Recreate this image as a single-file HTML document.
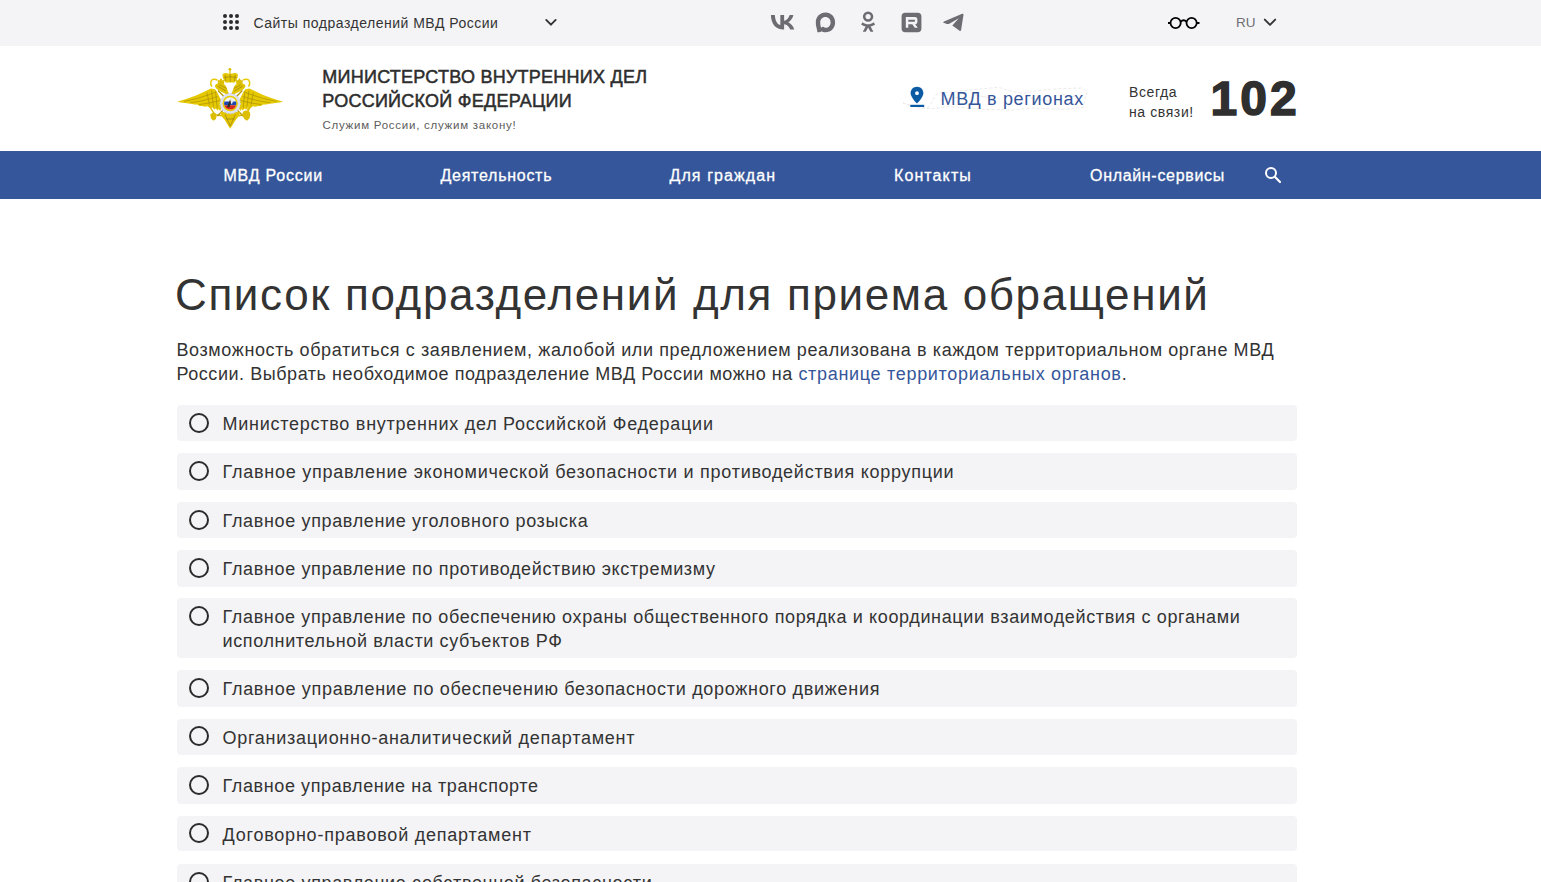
<!DOCTYPE html>
<html lang="ru">
<head>
<meta charset="utf-8">
<title>Список подразделений для приема обращений</title>
<style>
html,body{margin:0;padding:0;background:#fff;}
body{width:1541px;height:882px;overflow:hidden;position:relative;font-family:"Liberation Sans",sans-serif;color:#333;}
.a{position:absolute;white-space:nowrap;}
#topbar{position:absolute;left:0;top:0;width:1541px;height:46px;background:#f4f4f6;}
#nav{position:absolute;left:0;top:151px;width:1541px;height:48px;background:#35569a;}
.nav{position:absolute;top:164.2px;line-height:24px;font-size:16px;font-weight:400;letter-spacing:0.3px;-webkit-text-stroke:0.3px #fff;color:#fff;white-space:nowrap;}
.box{position:absolute;left:177px;width:1120px;background:#f4f4f6;border-radius:4px;}
.box .r{position:absolute;left:12px;top:7.5px;width:16px;height:16px;border:2px solid #2b2b2b;border-radius:50%;}
.box .t{position:absolute;left:45.5px;top:6.8px;font-size:18px;line-height:24px;letter-spacing:0.68px;color:#333;white-space:nowrap;}
</style>
</head>
<body>
<div id="topbar"></div>
<!-- grid dots -->
<svg class="a" style="left:221px;top:12px" width="20" height="20" viewBox="0 0 20 20">
<g fill="#2b2b2b"><circle cx="4" cy="4" r="2"/><circle cx="10" cy="4" r="2"/><circle cx="16" cy="4" r="2"/><circle cx="4" cy="10" r="2"/><circle cx="10" cy="10" r="2"/><circle cx="16" cy="10" r="2"/><circle cx="4" cy="16" r="2"/><circle cx="10" cy="16" r="2"/><circle cx="16" cy="16" r="2"/></g>
</svg>
<div class="a" style="left:253.5px;top:11px;font-size:14px;line-height:24px;letter-spacing:0.5px;color:#333">Сайты подразделений МВД России</div>
<svg class="a" style="left:543px;top:16px" width="16" height="12" viewBox="0 0 16 12"><path d="M3.2 3.9 L7.9 8.7 L12.7 3.9" fill="none" stroke="#333" stroke-width="1.9" stroke-linecap="round" stroke-linejoin="round"/></svg>

<!-- socials placeholder -->
<svg class="a" style="left:760px;top:5px" width="220" height="35" viewBox="760 5 220 35">
<g fill="#6d6c72">
<path transform="translate(765 4.2) scale(0.35)" d="M53.2 72.1C30.4 72.1 17.4 56.5 16.9 30.5H28.3C28.7 49.6 37.1 57.7 43.8 59.4V30.5H54.6V47C61.2 46.3 68.1 38.8 70.5 30.5H81.2C79.4 40.7 71.9 48.2 66.6 51.3C71.9 53.8 80.4 60.3 83.6 72.1H71.8C69.3 64.2 63 58.1 54.6 57.3V72.1H53.2Z"/>
<path fill-rule="evenodd" d="M825.6 12.6C831 12.6 835.1 16.9 835.1 22.4C835.1 27.9 831 32.2 825.6 32.2C823.9 32.2 822.6 31.8 821.6 31.2C820.6 32 819 32.5 817.4 32.3C817.2 30.5 816.8 28.6 816.3 26.8C816 25.6 815.8 24 815.8 22.4C815.8 16.9 820 12.6 825.6 12.6ZM825.4 17.1C822.2 17.1 820.2 19.6 820.2 22.5C820.2 24.3 820.5 26.2 821.1 27.8C821.9 27 822.8 26.6 823.6 26.9C824.2 27.3 824.8 27.7 825.6 27.7C828.6 27.7 830.6 25.3 830.6 22.4C830.6 19.5 828.5 17.1 825.4 17.1Z"/>
<path fill-rule="evenodd" d="M868.1 11.4A5.2 5.2 0 1 1 868.1 21.8A5.2 5.2 0 1 1 868.1 11.4ZM868.1 14A2.6 2.6 0 1 0 868.1 19.2A2.6 2.6 0 1 0 868.1 14Z"/>
<path d="M862.6 22.2C864.5 23.6 866.2 24.2 868.1 24.2C870 24.2 871.7 23.6 873.6 22.2L875.1 24.4C873.8 25.5 872.3 26.2 870.6 26.6L873.4 31.7H870.4L868.1 27.6L865.8 31.7H862.8L865.6 26.6C863.9 26.2 862.4 25.5 861.1 24.4Z"/>
<path fill-rule="evenodd" d="M905.1 12.7H917.9C920 12.7 921.4 14.1 921.4 16.2V28.7C921.4 30.8 920 32.2 917.9 32.2H905.1C903 32.2 901.6 30.8 901.6 28.7V16.2C901.6 14.1 903 12.7 905.1 12.7ZM905.8 17.1V27.7H908.3V24.3H912.3L914.8 27.7H917.8L915.2 24.2C916.6 24 917.4 23.2 917.4 21.8V19.5C917.4 18 916.5 17.1 915 17.1ZM908.3 19.7H914.9V21.7H908.3Z"/>
<path d="M943.1 22.4C943.1 21.9 943.5 21.6 944 21.4L962.2 13.8C962.9 13.5 963.6 14 963.5 14.8L961.1 30C961 30.8 960.2 31.1 959.6 30.7L952.3 25.6L958.8 18.2L949.3 23.8C948.5 24.2 947.6 24.2 946.8 23.9Z"/>
</g></svg>

<!-- glasses -->
<svg class="a" style="left:1166px;top:14px" width="36" height="18" viewBox="0 0 36 18">
<g fill="none" stroke="#000" stroke-width="1.8"><circle cx="9.6" cy="9" r="5.1"/><circle cx="25.6" cy="9" r="5.1"/><path d="M14.5 8 Q17.6 4.5 20.7 8"/><path d="M2 9 H4.5 M31 9 H33.5"/></g>
</svg>
<div class="a" style="left:1236px;top:11px;font-size:13.5px;line-height:24px;color:#6e6e73">RU</div>
<svg class="a" style="left:1261px;top:14px" width="18" height="14" viewBox="0 0 18 14"><path d="M3.8 5.6 L9 10.8 L14.2 5.6" fill="none" stroke="#333" stroke-width="1.9" stroke-linecap="round" stroke-linejoin="round"/></svg>

<!-- header -->
<svg class="a" style="left:175px;top:65px" width="112" height="67" viewBox="175 65 112 67">
<g>
<path d="M177.2 101.7 L187 98.7 L197.2 94.9 L205.7 91 L210.8 88.5 L215 89.3 L217.2 92.3 L219.3 96.6 L221.5 100.8 L221.5 108 L220.2 111 L218.8 109 L217.6 110.6 L215.9 108.6 L214.3 109.6 L212.5 107.6 L210.2 108.2 L207.4 106.3 L204.8 106.8 L202.3 105.9 L199.6 105.9 L197.2 104.6 L194.2 104.6 L191.3 103.8 L188.2 103.6 L185.3 102.9 L181 102.6 Z" fill="#e6c900"/>
<path d="M184 101.4 L197 98.5 L208 95 L215 92.5 M190 102.8 L201 101 L211 98.5 L217.5 96.5 M199 104.6 L208 103.2 L216 101.5 L220 100.5 M207 92.5 L209.5 105.5 M211.5 90.5 L213.5 106.8 M215.5 91 L217.2 108" fill="none" stroke="#968010" stroke-width="0.75" opacity="0.7"/>
<path d="M215 85.5 C216 83.5 219 83 222 83.5 C224.5 84 226 85.5 226.8 88 C227.6 90.5 228.3 92.5 229.6 94.8 L226 94.2 C223.5 92.8 220 91.2 217.5 89.6 C216 88.6 215 87 215 85.5 Z" fill="#e2c502"/>
<path d="M217.5 86 L226 91 M219.5 84.8 L226.5 88.5" stroke="#968010" stroke-width="0.7"/>
<path d="M218 84.2 L217.6 79.6 L219.4 80.6 L221 78 L222.6 80.6 L224.4 79.6 L224 84.2 Z" fill="#dcbf04"/>
<path d="M217.2 80.2 C215 78.6 211.6 79 210.9 81.6 C210.4 83.6 211 85.5 212 86.5" fill="none" stroke="#e6c900" stroke-width="1.5"/>
<path d="M208.3 104.2 L214.1 113.6" stroke="#dcbf04" stroke-width="1.3"/>
<path d="M210.2 114.5 L213.5 112 L216.9 114.2 L216 119 L213.5 120.8 L211 118.5 Z" fill="#dabd04"/>
<path d="M216.5 115 L222 115.8" stroke="#dabd04" stroke-width="1.4"/>
</g>
<g transform="translate(460.4 0) scale(-1 1)">
<path d="M177.2 101.7 L187 98.7 L197.2 94.9 L205.7 91 L210.8 88.5 L215 89.3 L217.2 92.3 L219.3 96.6 L221.5 100.8 L221.5 108 L220.2 111 L218.8 109 L217.6 110.6 L215.9 108.6 L214.3 109.6 L212.5 107.6 L210.2 108.2 L207.4 106.3 L204.8 106.8 L202.3 105.9 L199.6 105.9 L197.2 104.6 L194.2 104.6 L191.3 103.8 L188.2 103.6 L185.3 102.9 L181 102.6 Z" fill="#e6c900"/>
<path d="M184 101.4 L197 98.5 L208 95 L215 92.5 M190 102.8 L201 101 L211 98.5 L217.5 96.5 M199 104.6 L208 103.2 L216 101.5 L220 100.5 M207 92.5 L209.5 105.5 M211.5 90.5 L213.5 106.8 M215.5 91 L217.2 108" fill="none" stroke="#968010" stroke-width="0.75" opacity="0.7"/>
<path d="M215 85.5 C216 83.5 219 83 222 83.5 C224.5 84 226 85.5 226.8 88 C227.6 90.5 228.3 92.5 229.6 94.8 L226 94.2 C223.5 92.8 220 91.2 217.5 89.6 C216 88.6 215 87 215 85.5 Z" fill="#e2c502"/>
<path d="M217.5 86 L226 91 M219.5 84.8 L226.5 88.5" stroke="#968010" stroke-width="0.7"/>
<path d="M218 84.2 L217.6 79.6 L219.4 80.6 L221 78 L222.6 80.6 L224.4 79.6 L224 84.2 Z" fill="#dcbf04"/>
<path d="M217.2 80.2 C215 78.6 211.6 79 210.9 81.6 C210.4 83.6 211 85.5 212 86.5" fill="none" stroke="#e6c900" stroke-width="1.5"/>
<path d="M208.3 104.2 L214.1 113.6" stroke="#dcbf04" stroke-width="1.3"/>
<path d="M210.2 114.5 L213.5 112 L216.9 114.2 L216 119 L213.5 120.8 L211 118.5 Z" fill="#dabd04"/>
<path d="M216.5 115 L222 115.8" stroke="#dabd04" stroke-width="1.4"/>
</g>
<path d="M223.6 80.5 Q230.2 79 236.8 80.5" fill="none" stroke="#e2c502" stroke-width="1"/>
<path d="M225.6 82.5 C224 80 222.5 78 222.5 75.5 C222.5 73.5 224.5 72.8 226.5 73.2 C228 73.5 229 73.8 230.2 73.5 C231.4 73.8 232.4 73.5 233.9 73.2 C235.9 72.8 237.9 73.5 237.9 75.5 C237.9 78 236.4 80 234.8 82.5 Z" fill="#e4c702"/>
<path d="M226 81 L225 75 M230.2 81.5 V74 M234.4 81 L235.4 75 M224 77.5 Q230.2 76 236.4 77.5" fill="none" stroke="#968010" stroke-width="0.65"/>
<circle cx="229.9" cy="69.3" r="1.4" fill="#dcbf04"/>
<path d="M229.9 70 V73.5" stroke="#dcbf04" stroke-width="1.3"/>
<path d="M218 90.5 L243 116 M242.4 90.5 L217.4 116" stroke="#b89c0a" stroke-width="1.4"/>
<path d="M220 112 L240.4 112 L239 116 L235.6 120 L232 126 L230.2 128.8 L228.4 126 L224.8 120 L221.4 116 Z" fill="#e4c702"/>
<path d="M225 114.5 L230.2 126 L235.4 114.5 M226 119 H234.4" fill="none" stroke="#968010" stroke-width="0.7"/>
<circle cx="230.2" cy="103.6" r="10.2" fill="#dde1f2"/>
<circle cx="230.2" cy="103.6" r="10.2" fill="none" stroke="#c4cbe6" stroke-width="1" stroke-dasharray="1.5 1.5"/>
<circle cx="230.2" cy="103.5" r="7.7" fill="#e8cb00"/>
<circle cx="230.2" cy="103.4" r="6.1" fill="#f4f4f4"/><path d="M224.37 101.6 H236.03 A6.1 6.1 0 0 1 236.03 105.2 H224.37 A6.1 6.1 0 0 1 224.37 101.6 Z" fill="#1f48b0"/><path d="M224.37 105.2 H236.03 A6.1 6.1 0 0 1 224.37 105.2 Z" fill="#d8281e"/>
<circle cx="246.3" cy="114.4" r="3.9" fill="#dcbf04"/><path d="M248.2 107.5 V111 M246.6 109 H249.8" stroke="#dcbf04" stroke-width="1.2"/>
<path d="M227 107 L228.6 103 L230.4 99 L231.6 99.6 L230.6 104 L229.4 107.5 Z" fill="#2c2c2c"/>
<path d="M230 99 L232.5 98.5 L233 102 L231.4 104.5 Z" fill="#e6e8ee"/>
</svg>
<div class="a" style="left:322.3px;top:64.5px;font-size:18px;line-height:24px;font-weight:400;letter-spacing:0.25px;-webkit-text-stroke:0.5px #2d2d2d;color:#2d2d2d">МИНИСТЕРСТВО ВНУТРЕННИХ ДЕЛ</div>
<div class="a" style="left:322.3px;top:88.5px;font-size:18px;line-height:24px;font-weight:400;letter-spacing:0.25px;-webkit-text-stroke:0.5px #2d2d2d;color:#2d2d2d">РОССИЙСКОЙ ФЕДЕРАЦИИ</div>
<div class="a" style="left:322.5px;top:117px;font-size:11.5px;line-height:16px;letter-spacing:0.74px;color:#5c5c5c">Служим России, служим закону!</div>

<svg class="a" style="left:900px;top:84px" width="190" height="30" viewBox="900 84 190 30"><path d="M903 103 L910.6 105.5 L920 107 L927.4 108 L931 104 L934 97.7 L937.8 93.2 L950 92 L965 90.5 L985 88.5 L998.8 87.3 L1006.6 90 L1015 92 L1024.8 93.2 L1035 91 L1050.7 89.3 L1065 88.5 L1081.9 88 L1087 91.9 L1085 100 L1083.2 107.4 L1063.7 109.4 L1045 108.5 L1031.3 108.1 L1011.8 110 L985.9 109.4 L959.9 107.4 L946.9 106.8 L931.3 108.7 L918 108 Z" fill="none" stroke="#ebebeb" stroke-width="1" stroke-dasharray="3 2"/><path d="M940 100 L960 97 M975 95 L995 99 M1030 98 L1050 101 M1060 94 L1075 97" stroke="#ececec" stroke-width="1"/></svg>
<svg class="a" style="left:908px;top:86px" width="18" height="22" viewBox="0 0 18 22"><path d="M9 0.8 C5.3 0.8 2.6 3.6 2.6 7.2 C2.6 11.2 9 17.6 9 17.6 C9 17.6 15.4 11.2 15.4 7.2 C15.4 3.6 12.7 0.8 9 0.8 Z M9 5.3 A1.9 1.9 0 1 1 9 9.1 A1.9 1.9 0 1 1 9 5.3 Z" fill="#0b5aa4" fill-rule="evenodd"/><rect x="2.3" y="18.8" width="13.9" height="2.2" fill="#0b5aa4"/></svg>
<div class="a" style="left:940.5px;top:86.5px;font-size:18px;line-height:24px;letter-spacing:0.67px;color:#35569a">МВД в регионах</div>

<div class="a" style="left:1129px;top:82.3px;font-size:14px;line-height:20px;letter-spacing:0.6px;color:#333">Всегда</div>
<div class="a" style="left:1129px;top:101.7px;font-size:14px;line-height:20px;letter-spacing:0.6px;color:#333">на связи!</div>
<div class="a" style="left:1210.5px;top:74px;font-size:48px;line-height:50px;font-weight:700;letter-spacing:3px;-webkit-text-stroke:1.5px #2f2f2f;color:#2f2f2f">102</div>

<div id="nav"></div>
<div class="nav" style="left:223.5px;letter-spacing:0.77px">МВД России</div>
<div class="nav" style="left:440.5px;letter-spacing:0.73px">Деятельность</div>
<div class="nav" style="left:669.5px;letter-spacing:1.09px">Для граждан</div>
<div class="nav" style="left:894px;letter-spacing:1.1px">Контакты</div>
<div class="nav" style="left:1090px;letter-spacing:0.68px">Онлайн-сервисы</div>
<svg class="a" style="left:1262px;top:164px" width="22" height="22" viewBox="0 0 22 22"><circle cx="9" cy="9" r="5" fill="none" stroke="#fff" stroke-width="2"/><path d="M12.8 12.8 L18 18" stroke="#fff" stroke-width="2.2" stroke-linecap="round"/></svg>

<!-- content -->
<div class="a" style="left:175px;top:269.5px;font-size:44px;line-height:50px;letter-spacing:1.63px;color:#333">Список подразделений для приема обращений</div>
<div class="a" style="left:176.5px;top:337.8px;font-size:18px;line-height:24px;letter-spacing:0.6px;color:#333">Возможность обратиться с заявлением, жалобой или предложением реализована в каждом территориальном органе МВД</div>
<div class="a" style="left:176.5px;top:361.8px;font-size:18px;line-height:24px;letter-spacing:0.545px;color:#333">России. Выбрать необходимое подразделение МВД России можно на <span style="color:#35569a;letter-spacing:0.69px">странице территориальных органов</span>.</div>

<div class="box" style="top:405px;height:36px"><div class="r"></div><div class="t" style="letter-spacing:0.742px">Министерство внутренних дел Российской Федерации</div></div>
<div class="box" style="top:453.2px;height:36.4px"><div class="r"></div><div class="t" style="letter-spacing:0.736px">Главное управление экономической безопасности и противодействия коррупции</div></div>
<div class="box" style="top:502px;height:35.8px"><div class="r"></div><div class="t" style="letter-spacing:0.652px">Главное управление уголовного розыска</div></div>
<div class="box" style="top:550.3px;height:36.3px"><div class="r"></div><div class="t" style="letter-spacing:0.649px">Главное управление по противодействию экстремизму</div></div>
<div class="box" style="top:598.2px;height:59.7px"><div class="r"></div><div class="t" style="letter-spacing:0.63px">Главное управление по обеспечению охраны общественного порядка и координации взаимодействия с органами<br>исполнительной власти субъектов РФ</div></div>
<div class="box" style="top:670.3px;height:36.5px"><div class="r"></div><div class="t" style="letter-spacing:0.696px">Главное управление по обеспечению безопасности дорожного движения</div></div>
<div class="box" style="top:718.8px;height:36.1px"><div class="r"></div><div class="t" style="letter-spacing:0.731px">Организационно-аналитический департамент</div></div>
<div class="box" style="top:767.3px;height:36.5px"><div class="r"></div><div class="t" style="letter-spacing:0.603px">Главное управление на транспорте</div></div>
<div class="box" style="top:815.8px;height:35.6px"><div class="r"></div><div class="t" style="letter-spacing:0.777px">Договорно-правовой департамент</div></div>
<div class="box" style="top:864.3px;height:36px"><div class="r"></div><div class="t" style="letter-spacing:0.651px">Главное управление собственной безопасности</div></div>
</body>
</html>
